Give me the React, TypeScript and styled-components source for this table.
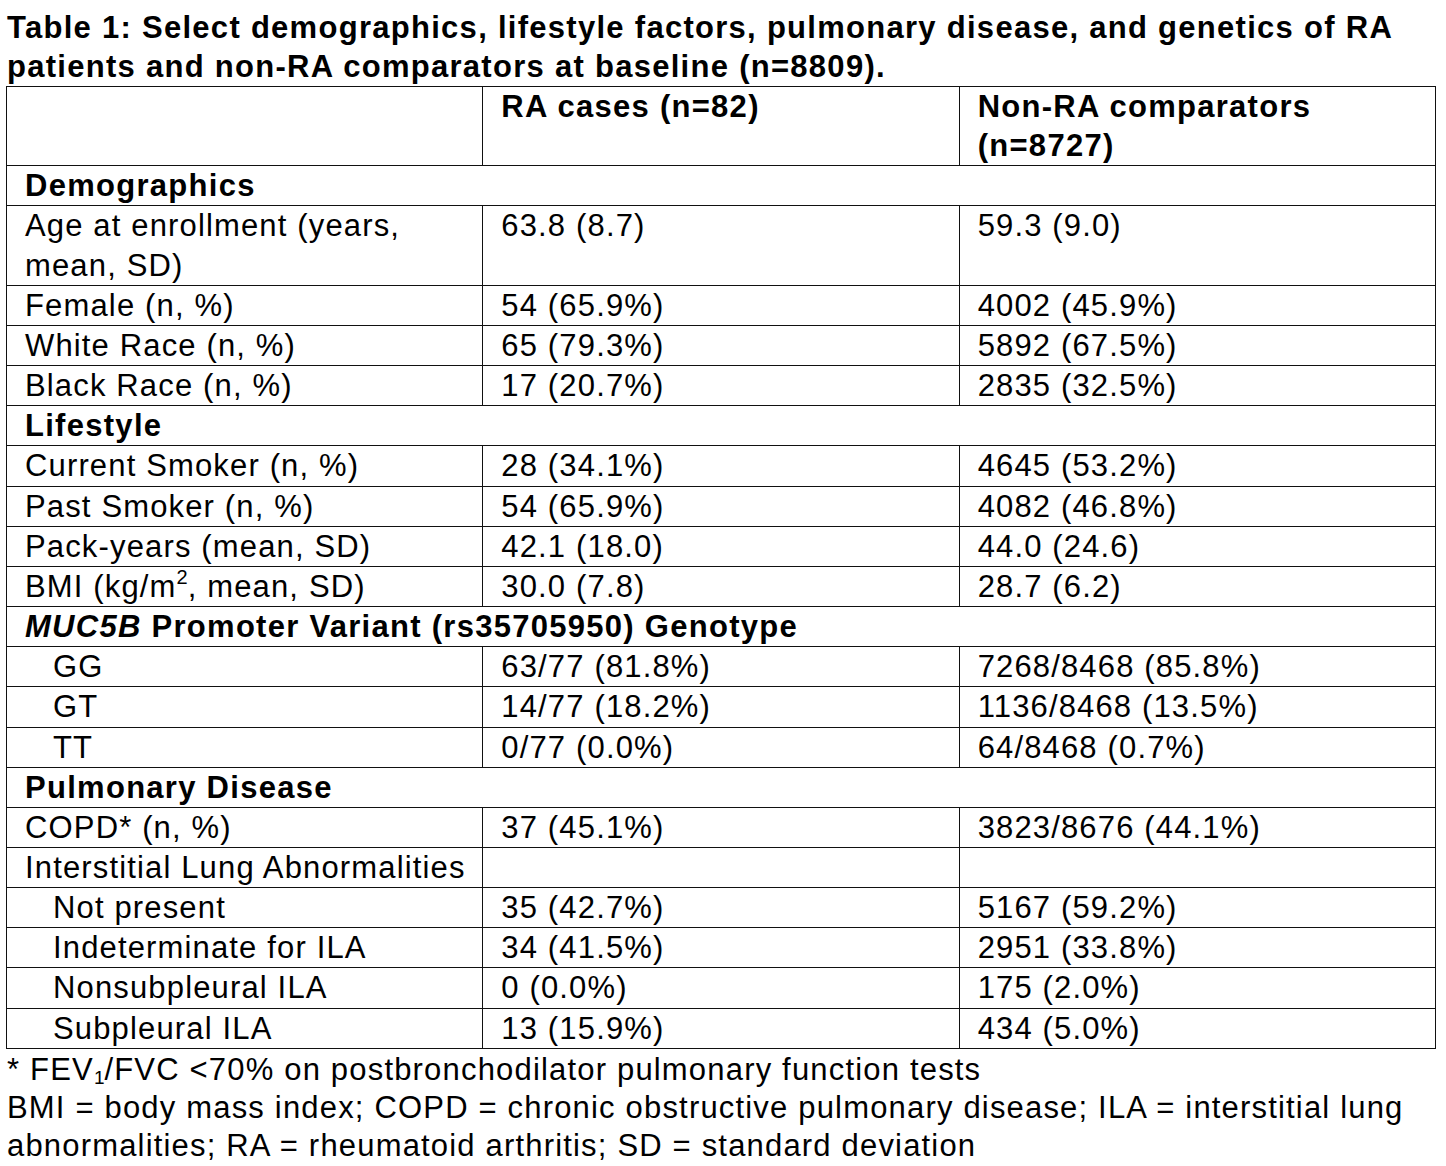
import React from 'react';
import styled, { createGlobalStyle } from 'styled-components';

const GlobalStyle = createGlobalStyle`
  html, body {
    margin: 0;
    padding: 0;
    background: #fff;
  }
  body {
    font-family: "Liberation Sans", Arial, sans-serif;
    color: #000;
  }
`;

const Page = styled.div`
  width: 1446px;
  padding: 8px 0 0 6px;
  box-sizing: border-box;
`;

const Title = styled.h1`
  margin: 0 0 0 1px;
  font-size: 31px;
  line-height: 39px;
  letter-spacing: 1.28px;
  font-weight: bold;
`;

const Table = styled.table`
  width: 1430px;
  border-collapse: collapse;
  table-layout: fixed;
  font-size: 31px;
  line-height: 39.15px;
  letter-spacing: 1.15px;
`;

const Cell = styled.td<{ $indent?: boolean; $bold?: boolean }>`
  border: 1.5px solid #111;
  padding: 0 0 0 ${(p) => (p.$indent ? '46px' : '18px')};
  vertical-align: top;
  font-weight: ${(p) => (p.$bold ? 'bold' : 'normal')};
  letter-spacing: ${(p) => (p.$bold ? '1.28px' : '1.15px')};
`;

const HeadCell = styled.th`
  border: 1.5px solid #111;
  padding: 0 0 0 18px;
  vertical-align: top;
  text-align: left;
  font-weight: bold;
  letter-spacing: 1.28px;
`;

const Notes = styled.div`
  font-size: 31px;
  line-height: 38px;
  letter-spacing: 1.18px;
  margin: 2px 0 0 1px;
`;

const Sub = styled.sub`
  font-size: 19px;
  line-height: 0;
  letter-spacing: 0;
  vertical-align: -4px;
`;

const Sup = styled.sup`
  font-size: 20px;
  line-height: 0;
  letter-spacing: 0;
  vertical-align: 13px;
`;

type Row =
  | { kind: 'section'; label: React.ReactNode }
  | { kind: 'data'; label: React.ReactNode; ra: string; non: string; indent?: boolean };

const rows: Row[] = [
  { kind: 'section', label: 'Demographics' },
  { kind: 'data', label: <>Age at enrollment (years,<br />mean, SD)</>, ra: '63.8 (8.7)', non: '59.3 (9.0)' },
  { kind: 'data', label: 'Female (n, %)', ra: '54 (65.9%)', non: '4002 (45.9%)' },
  { kind: 'data', label: 'White Race (n, %)', ra: '65 (79.3%)', non: '5892 (67.5%)' },
  { kind: 'data', label: 'Black Race (n, %)', ra: '17 (20.7%)', non: '2835 (32.5%)' },
  { kind: 'section', label: 'Lifestyle' },
  { kind: 'data', label: 'Current Smoker (n, %)', ra: '28 (34.1%)', non: '4645 (53.2%)' },
  { kind: 'data', label: 'Past Smoker (n, %)', ra: '54 (65.9%)', non: '4082 (46.8%)' },
  { kind: 'data', label: 'Pack-years (mean, SD)', ra: '42.1 (18.0)', non: '44.0 (24.6)' },
  { kind: 'data', label: <>BMI (kg/m<Sup>2</Sup>, mean, SD)</>, ra: '30.0 (7.8)', non: '28.7 (6.2)' },
  { kind: 'section', label: <><i>MUC5B</i> Promoter Variant (rs35705950) Genotype</> },
  { kind: 'data', label: 'GG', ra: '63/77 (81.8%)', non: '7268/8468 (85.8%)', indent: true },
  { kind: 'data', label: 'GT', ra: '14/77 (18.2%)', non: '1136/8468 (13.5%)', indent: true },
  { kind: 'data', label: 'TT', ra: '0/77 (0.0%)', non: '64/8468 (0.7%)', indent: true },
  { kind: 'section', label: 'Pulmonary Disease' },
  { kind: 'data', label: 'COPD* (n, %)', ra: '37 (45.1%)', non: '3823/8676 (44.1%)' },
  { kind: 'data', label: 'Interstitial Lung Abnormalities', ra: '', non: '' },
  { kind: 'data', label: 'Not present', ra: '35 (42.7%)', non: '5167 (59.2%)', indent: true },
  { kind: 'data', label: 'Indeterminate for ILA', ra: '34 (41.5%)', non: '2951 (33.8%)', indent: true },
  { kind: 'data', label: 'Nonsubpleural ILA', ra: '0 (0.0%)', non: '175 (2.0%)', indent: true },
  { kind: 'data', label: 'Subpleural ILA', ra: '13 (15.9%)', non: '434 (5.0%)', indent: true },
];

export default function App() {
  return (
    <Page>
      <GlobalStyle />
      <Title>
        Table 1: Select demographics, lifestyle factors, pulmonary disease, and genetics of RA
        <br />
        patients and non-RA comparators at baseline (n=8809).
      </Title>
      <Table>
        <thead>
          <tr>
            <HeadCell />
            <HeadCell>RA cases (n=82)</HeadCell>
            <HeadCell>
              Non-RA comparators
              <br />
              (n=8727)
            </HeadCell>
          </tr>
        </thead>
        <tbody>
          {rows.map((row, i) =>
            row.kind === 'section' ? (
              <tr key={i}>
                <Cell $bold colSpan={3}>{row.label}</Cell>
              </tr>
            ) : (
              <tr key={i}>
                <Cell $indent={row.indent}>{row.label}</Cell>
                <Cell>{row.ra}</Cell>
                <Cell>{row.non}</Cell>
              </tr>
            )
          )}
        </tbody>
      </Table>
      <Notes>
        * FEV<Sub>1</Sub>/FVC &lt;70% on postbronchodilator pulmonary function tests
        <br />
        BMI = body mass index; COPD = chronic obstructive pulmonary disease; ILA = interstitial lung
        <br />
        abnormalities; RA = rheumatoid arthritis; SD = standard deviation
      </Notes>
    </Page>
  );
}
